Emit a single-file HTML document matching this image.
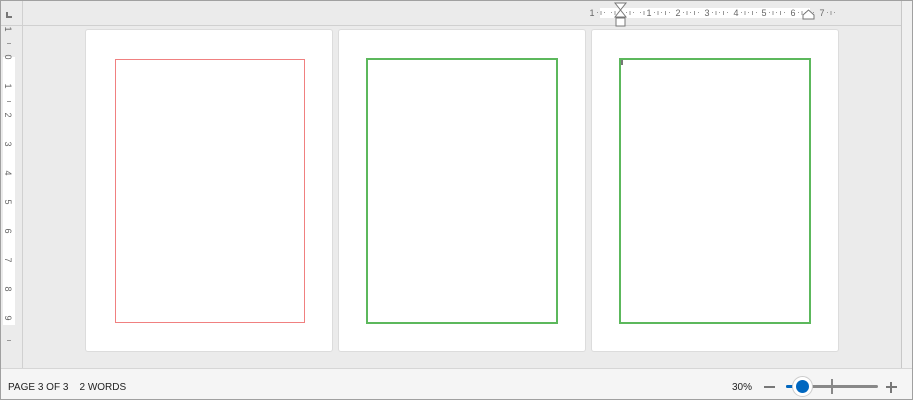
<!DOCTYPE html>
<html><head><meta charset="utf-8"><style>
*{margin:0;padding:0;box-sizing:border-box}
body{width:913px;height:400px;overflow:hidden;font-family:"Liberation Sans",sans-serif;background:#fff;position:relative}
.frame{position:absolute;left:0;top:0;width:913px;height:400px;border:1px solid #a0a0a0;background:#ebebeb}
.abs{position:absolute}
.page{position:absolute;top:29px;width:248px;height:323px;background:#fff;border:1px solid #dcdcdc;border-radius:3px}
.n{position:absolute;top:8px;font-size:9px;color:#666;line-height:10px;width:8px;text-align:center}
.t{position:absolute;width:1px;background:#999}
.vn{position:absolute;left:4px;font-size:9px;color:#666;transform:rotate(90deg);width:8px;text-align:center}
</style></head><body>
<div class="frame"></div>
 <div class="abs" style="left:1px;top:25px;width:900px;height:1px;background:#d0d0d0"></div>
 <div class="abs" style="left:22px;top:1px;width:1px;height:367px;background:#d0d0d0"></div>
 <div class="abs" style="left:6px;top:12px;width:6px;height:6px;border-left:2px solid #777;border-bottom:2px solid #777"></div>
 <div class="abs" style="left:600px;top:8px;width:210px;height:10px;background:#fff"></div>
 <div class="n" style="left:588px">1</div>
 <div class="n" style="left:645px">1</div>
 <div class="n" style="left:674px">2</div>
 <div class="n" style="left:703px">3</div>
 <div class="n" style="left:732px">4</div>
 <div class="n" style="left:760px">5</div>
 <div class="n" style="left:789px">6</div>
 <div class="n" style="left:818px">7</div>
 <svg class="abs" style="left:590px;top:8px" width="245" height="10">
  <g fill="#999">
   <rect x="7" y="4" width="1" height="1"/><rect x="10.5" y="3" width="1" height="4"/><rect x="14" y="4" width="1" height="1"/><rect x="21" y="4" width="1" height="1"/><rect x="24.5" y="3" width="1" height="4"/><rect x="28" y="4" width="1" height="1"/>
   <rect x="36" y="4" width="1" height="1"/><rect x="39.5" y="3" width="1" height="4"/><rect x="43" y="4" width="1" height="1"/><rect x="50" y="4" width="1" height="1"/><rect x="53.5" y="3" width="1" height="4"/>
   <g id="s"><rect x="64" y="4" width="1" height="1"/><rect x="67.5" y="3" width="1" height="4"/><rect x="71" y="4" width="1" height="1"/><rect x="75" y="3" width="1" height="4"/><rect x="79" y="4" width="1" height="1"/></g>
   <use href="#s" x="29"/><use href="#s" x="58"/><use href="#s" x="87"/><use href="#s" x="115"/><use href="#s" x="144"/><use href="#s" x="173"/>
  </g>
 </svg>
 <svg class="abs" style="left:613px;top:2px" width="16" height="25"><path d="M2 1H13L7.5 8Z M2 15L7.5 8L13 15Z" fill="#fff" stroke="#777"/><rect x="3" y="16" width="9" height="8" fill="#fff" stroke="#777"/></svg>
 <svg class="abs" style="left:802px;top:9px" width="14" height="12"><path d="M1 10V6L6.5 1L12 6V10Z" fill="#fff" stroke="#777"/></svg>
 <div class="abs" style="left:901px;top:1px;width:1px;height:367px;background:#c8c8c8"></div>
 <div class="abs" style="left:902px;top:1px;width:10px;height:367px;background:#f0f0f0"></div>
 <div class="abs" style="left:3px;top:57px;width:12px;height:268px;background:#fff"></div>
 <div class="vn" style="top:24px">1</div>
 <div class="vn" style="top:52px">0</div>
 <div class="vn" style="top:81px">1</div>
 <div class="vn" style="top:110px">2</div>
 <div class="vn" style="top:139px">3</div>
 <div class="vn" style="top:168px">4</div>
 <div class="vn" style="top:197px">5</div>
 <div class="vn" style="top:226px">6</div>
 <div class="vn" style="top:255px">7</div>
 <div class="vn" style="top:284px">8</div>
 <div class="vn" style="top:313px">9</div>
 <div class="abs" style="left:7px;top:43px;width:4px;height:1px;background:#999"></div>
 <div class="abs" style="left:7px;top:101px;width:4px;height:1px;background:#999"></div>
 <div class="abs" style="left:7px;top:340px;width:4px;height:1px;background:#999"></div>
 <div class="page" style="left:85px"><div class="abs" style="left:29px;top:29px;width:190px;height:264px;border:1px solid #f08080"></div></div>
 <div class="page" style="left:338px"><div class="abs" style="left:27px;top:28px;width:192px;height:266px;border:2px solid #5cb85c"></div></div>
 <div class="page" style="left:591px"><div class="abs" style="left:27px;top:28px;width:192px;height:266px;border:2px solid #5cb85c"></div><div class="abs" style="left:29px;top:30px;width:2px;height:5px;background:#777"></div></div>
 <div class="abs" style="left:1px;top:368px;width:911px;height:31px;background:#f5f5f5;border-top:1px solid #d6d6d6"></div>
 <div class="abs" style="left:8px;top:382px;font-size:10px;color:#222">PAGE 3 OF 3&nbsp;&nbsp;&nbsp;&nbsp;2 WORDS</div>
 <div class="abs" style="left:732px;top:382px;font-size:10px;color:#222">30%</div>
 <div class="abs" style="left:764px;top:386px;width:11px;height:2px;background:#777"></div>
 <div class="abs" style="left:786px;top:385px;width:92px;height:3px;background:#888;border-radius:2px"></div>
 <div class="abs" style="left:786px;top:385px;width:14px;height:3px;background:#0067c0;border-radius:2px"></div>
 <div class="abs" style="left:831px;top:379px;width:2px;height:15px;background:#888"></div>
 <div class="abs" style="left:792px;top:376px;width:21px;height:21px;border-radius:50%;background:#fff;border:1px solid #ccc"></div>
 <div class="abs" style="left:796px;top:380px;width:13px;height:13px;border-radius:50%;background:#0067c0"></div>
 <div class="abs" style="left:886px;top:386px;width:11px;height:2px;background:#777"></div>
 <div class="abs" style="left:890px;top:382px;width:2px;height:11px;background:#777"></div>
</body></html>
